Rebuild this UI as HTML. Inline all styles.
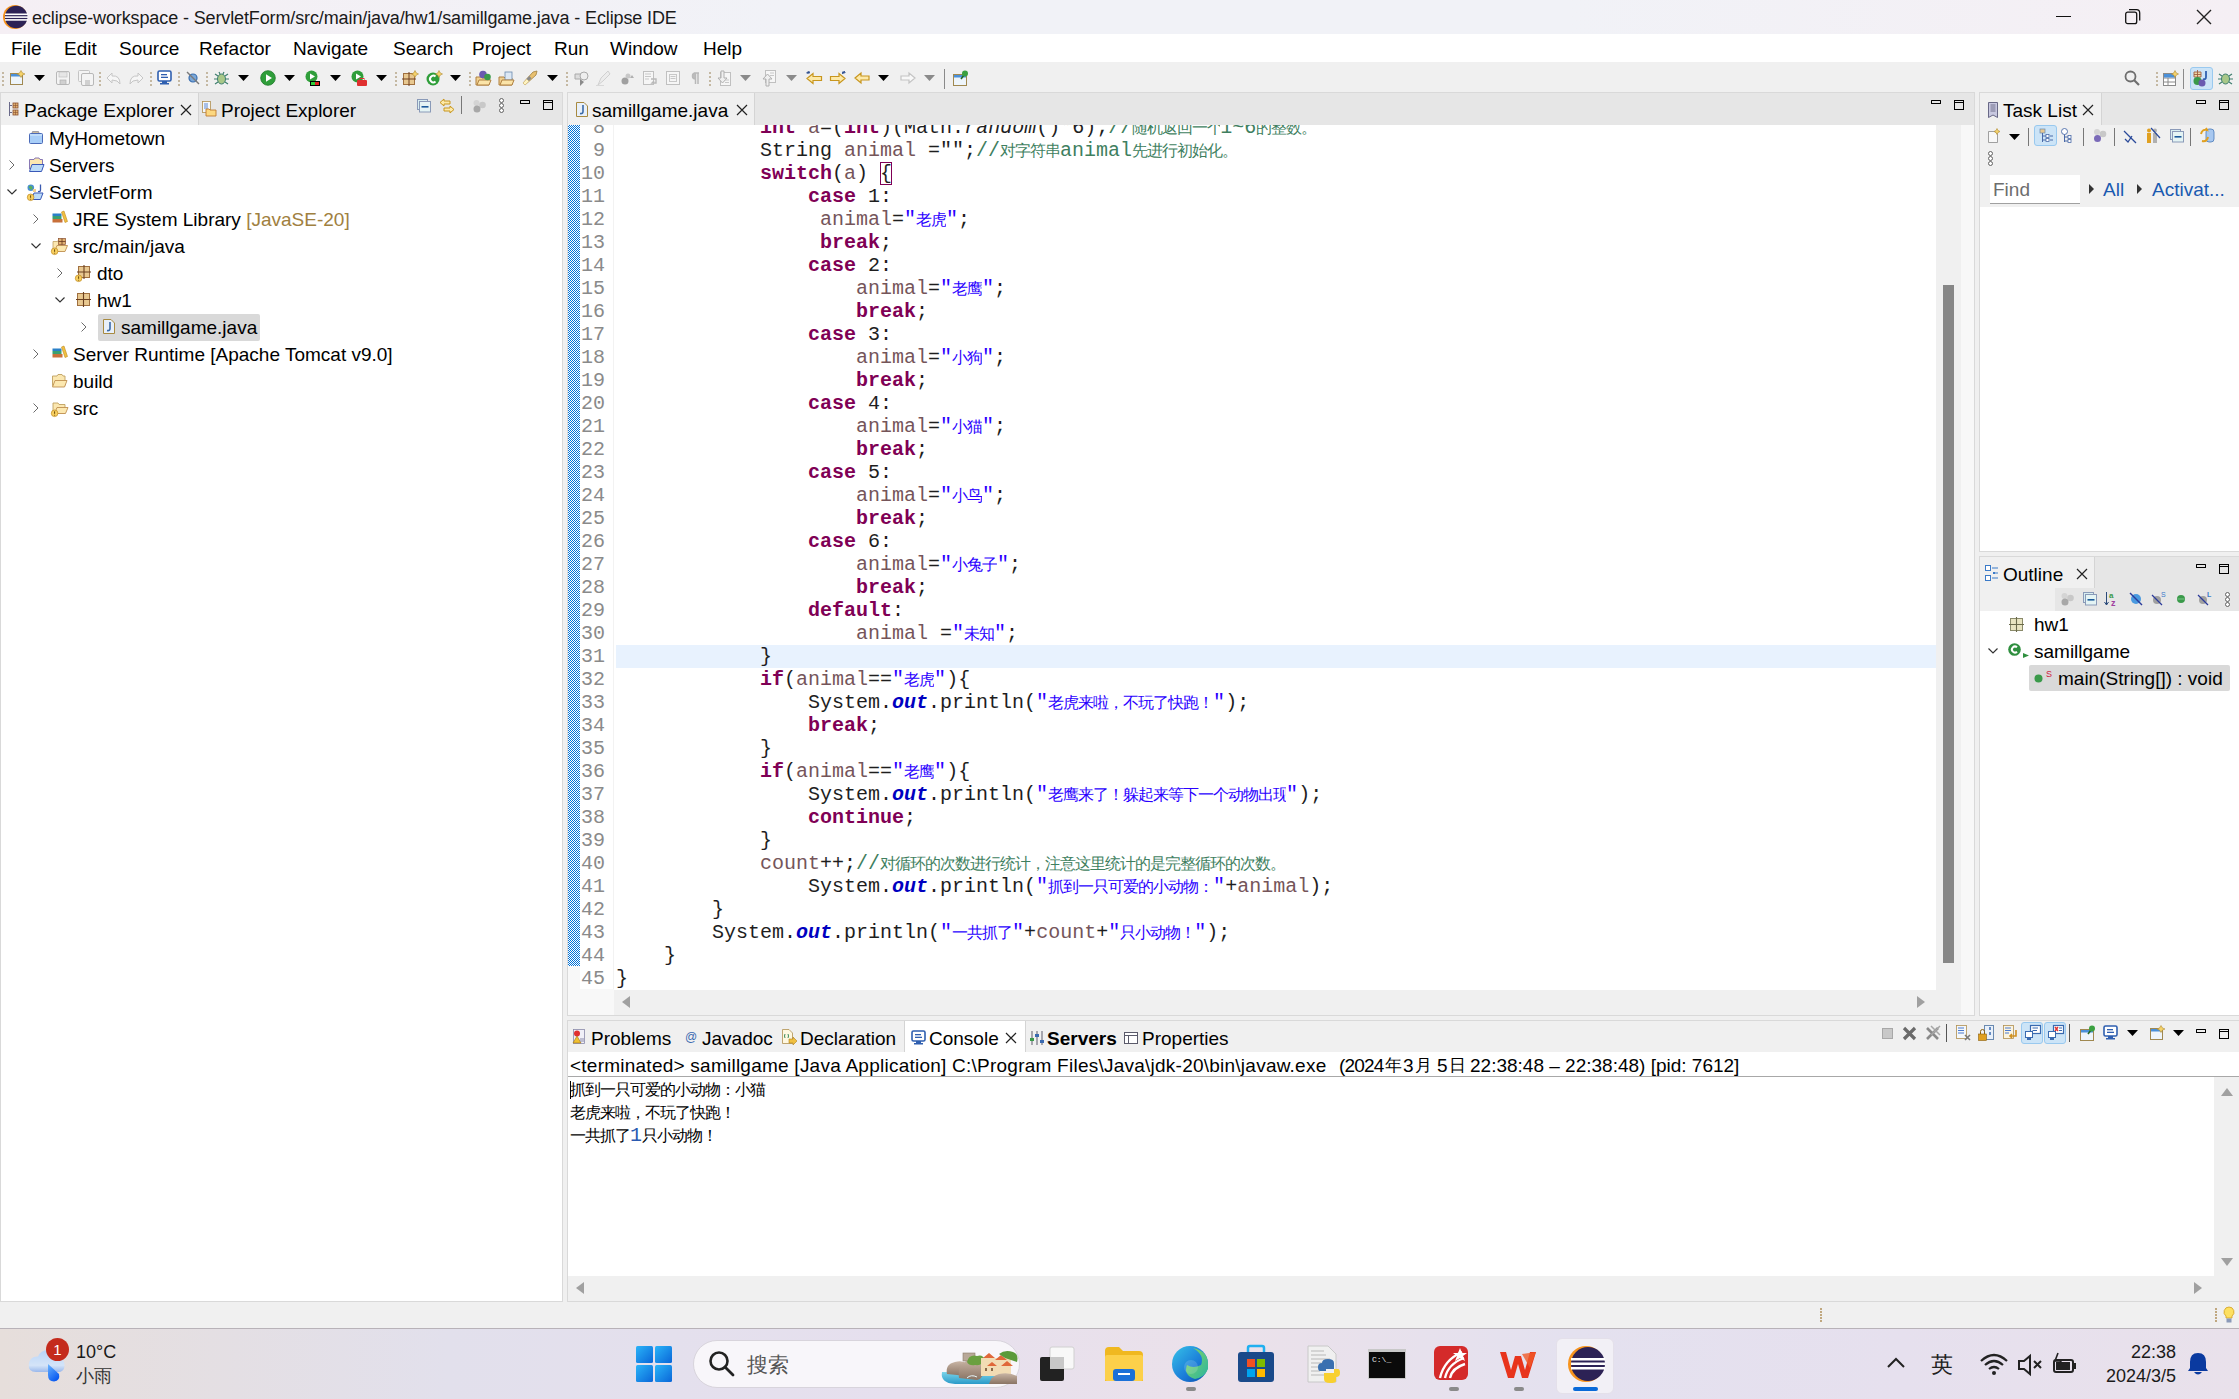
<!DOCTYPE html><html><head><meta charset="utf-8"><style>
*{margin:0;padding:0;box-sizing:border-box}
html,body{width:2239px;height:1399px;overflow:hidden}
body{position:relative;background:#f0f0f0;font-family:"Liberation Sans",sans-serif;font-size:19px;color:#000}
.a{position:absolute}
.t{position:absolute;white-space:nowrap;line-height:27px;height:27px;margin-top:1px}
svg{position:absolute;overflow:visible}
.code{position:absolute;font-family:"Liberation Mono",monospace;font-size:20px;line-height:23px;white-space:pre;color:#1e1e1e}
.kw{color:#7f0055;font-weight:bold}
.lv{color:#75555a}
.st{color:#2a00ff}
.cm{color:#3f7f5f}
.fi{color:#0000c0;font-weight:bold;font-style:italic}
.it{font-style:italic}
.cj{display:inline-block;vertical-align:top;overflow:hidden;height:23px;font-family:"Liberation Sans",sans-serif;font-size:16px;letter-spacing:-1px;line-height:23px;white-space:nowrap}
.tab{position:absolute;top:0;height:33px;line-height:33px;white-space:nowrap}
</style></head><body>
<div class="a" style="left:0;top:0;width:2239px;height:34px;background:linear-gradient(90deg,#f5eff4 0%,#f1f2f7 35%,#f1f2f7 70%,#f5eff4 100%)"></div>
<svg style="left:2px;top:4px" width="26" height="26" viewBox="0 0 26 26"><circle cx="13" cy="13" r="12" fill="#f7941e"/><circle cx="14.2" cy="13" r="11.3" fill="#2c2255"/><rect x="3" y="9.5" width="23" height="1.6" fill="#fff"/><rect x="3" y="12.3" width="23" height="1.6" fill="#fff"/><rect x="3" y="15.1" width="23" height="1.6" fill="#fff"/></svg>
<div class="t" style="left:32px;top:3px;font-size:18px;line-height:28px;letter-spacing:-0.12px;color:#1a1a1a">eclipse-workspace - ServletForm/src/main/java/hw1/samillgame.java - Eclipse IDE</div>
<div class="a" style="left:2056px;top:16px;width:15px;height:1px;background:#111"></div>
<svg style="left:2125px;top:9px" width="16" height="16" viewBox="0 0 16 16"><rect x="0.7" y="3.2" width="11" height="11.5" rx="2" fill="none" stroke="#111" stroke-width="1.3"/><path d="M4 0.7 H11.5 Q14.7 0.7 14.7 4 V11.5" fill="none" stroke="#111" stroke-width="1.3"/></svg>
<svg style="left:2196px;top:9px" width="16" height="16" viewBox="0 0 16 16"><path d="M1 1 L15 15 M15 1 L1 15" stroke="#222" stroke-width="1.4"/></svg>
<div class="a" style="left:0;top:34px;width:2239px;height:28px;background:#fff"></div>
<div class="t" style="left:11px;top:34px;line-height:28px">File</div>
<div class="t" style="left:64px;top:34px;line-height:28px">Edit</div>
<div class="t" style="left:119px;top:34px;line-height:28px">Source</div>
<div class="t" style="left:199px;top:34px;line-height:28px">Refactor</div>
<div class="t" style="left:293px;top:34px;line-height:28px">Navigate</div>
<div class="t" style="left:393px;top:34px;line-height:28px">Search</div>
<div class="t" style="left:472px;top:34px;line-height:28px">Project</div>
<div class="t" style="left:554px;top:34px;line-height:28px">Run</div>
<div class="t" style="left:610px;top:34px;line-height:28px">Window</div>
<div class="t" style="left:703px;top:34px;line-height:28px">Help</div>
<div class="a" style="left:0px;top:62px;width:2239px;height:30px;background:#f0f0f0;"></div>
<div class="a" style="left:2px;top:72px;width:2px;height:2px;background:#c4b8a2"></div><div class="a" style="left:2px;top:76px;width:2px;height:2px;background:#c4b8a2"></div><div class="a" style="left:2px;top:80px;width:2px;height:2px;background:#c4b8a2"></div><div class="a" style="left:2px;top:84px;width:2px;height:2px;background:#c4b8a2"></div>
<svg style="left:9px;top:70px" width="16" height="16" viewBox="0 0 16 16"><rect x="1.5" y="3.5" width="12" height="11" fill="#eef5fb" stroke="#a08850"/><rect x="2" y="4" width="11" height="2.5" fill="#4a90d9"/><path d="M12 0.5 L13.5 3 L16 4 L13.5 5 L12 7.5 L10.5 5 L8 4 L10.5 3 Z" fill="#f5d36b" stroke="#b08a30" stroke-width="0.6"/></svg>
<svg style="left:34px;top:75px" width="11" height="6" viewBox="0 0 11 6"><path d="M0 0 H11 L5.5 6 Z" fill="#000"/></svg>
<svg style="left:55px;top:70px" width="16" height="16" viewBox="0 0 16 16"><rect x="1.5" y="1.5" width="13" height="13" rx="1.5" fill="#f4f4f4" stroke="#b8b8b8"/><rect x="4" y="2" width="8" height="5" fill="#e6e6e6" stroke="#c0c0c0" stroke-width="0.7"/><rect x="5" y="10" width="6" height="4.5" fill="#d0d0d0" stroke="#b0b0b0" stroke-width="0.7"/></svg>
<svg style="left:78px;top:70px" width="16" height="16" viewBox="0 0 16 16"><rect x="0.5" y="0.5" width="11" height="11" rx="1" fill="#f4f4f4" stroke="#c4c4c4"/><rect x="3.5" y="3.5" width="12" height="12" rx="1.5" fill="#f4f4f4" stroke="#b8b8b8"/><rect x="7" y="10" width="5" height="5" fill="#d0d0d0"/></svg>
<div class="a" style="left:99px;top:72px;width:2px;height:2px;background:#c4b8a2"></div><div class="a" style="left:99px;top:76px;width:2px;height:2px;background:#c4b8a2"></div><div class="a" style="left:99px;top:80px;width:2px;height:2px;background:#c4b8a2"></div><div class="a" style="left:99px;top:84px;width:2px;height:2px;background:#c4b8a2"></div>
<svg style="left:106px;top:70px" width="16" height="16" viewBox="0 0 16 16"><path d="M6 3 L1 8 L6 13 V10 Q12 10 14 14 Q14 5 6 6 Z" fill="#f6f6f6" stroke="#c6c6c6"/></svg>
<svg style="left:128px;top:70px" width="16" height="16" viewBox="0 0 16 16"><path d="M10 3 L15 8 L10 13 V10 Q4 10 2 14 Q2 5 10 6 Z" fill="#f6f6f6" stroke="#c6c6c6"/></svg>
<div class="a" style="left:150px;top:72px;width:2px;height:2px;background:#c4b8a2"></div><div class="a" style="left:150px;top:76px;width:2px;height:2px;background:#c4b8a2"></div><div class="a" style="left:150px;top:80px;width:2px;height:2px;background:#c4b8a2"></div><div class="a" style="left:150px;top:84px;width:2px;height:2px;background:#c4b8a2"></div>
<svg style="left:157px;top:70px" width="16" height="16" viewBox="0 0 16 16"><rect x="1" y="1" width="13" height="10" rx="1.5" fill="#fff" stroke="#2f5fb0" stroke-width="1.6"/><rect x="4" y="4" width="6" height="1.3" fill="#2f5fb0"/><rect x="4" y="6.7" width="7" height="1.3" fill="#2f5fb0"/><rect x="5" y="11" width="5" height="2" fill="#2f5fb0"/><rect x="3" y="13" width="9" height="1.5" fill="#2f5fb0"/></svg>
<div class="a" style="left:178px;top:72px;width:2px;height:2px;background:#c4b8a2"></div><div class="a" style="left:178px;top:76px;width:2px;height:2px;background:#c4b8a2"></div><div class="a" style="left:178px;top:80px;width:2px;height:2px;background:#c4b8a2"></div><div class="a" style="left:178px;top:84px;width:2px;height:2px;background:#c4b8a2"></div>
<svg style="left:185px;top:70px" width="16" height="16" viewBox="0 0 16 16"><circle cx="8" cy="8" r="4" fill="#7aa7d8" stroke="#3a6fb0" stroke-width="1.2"/><path d="M2 2 L14 14" stroke="#7a7a7a" stroke-width="1.4"/></svg>
<div class="a" style="left:206px;top:72px;width:2px;height:2px;background:#c4b8a2"></div><div class="a" style="left:206px;top:76px;width:2px;height:2px;background:#c4b8a2"></div><div class="a" style="left:206px;top:80px;width:2px;height:2px;background:#c4b8a2"></div><div class="a" style="left:206px;top:84px;width:2px;height:2px;background:#c4b8a2"></div>
<svg style="left:213px;top:70px" width="16" height="16" viewBox="0 0 16 16"><ellipse cx="8.5" cy="9" rx="4" ry="5" fill="#a8c888" stroke="#3f7f6f"/><path d="M2 4 L5 6 M15 4 L12 6 M1 9 H4.5 M16 9 H12.5 M2 14 L5 12 M15 14 L12 12 M6 2 L7 4 M11 2 L10 4" stroke="#3f7f6f" stroke-width="1.2"/></svg>
<svg style="left:238px;top:75px" width="11" height="6" viewBox="0 0 11 6"><path d="M0 0 H11 L5.5 6 Z" fill="#000"/></svg>
<svg style="left:260px;top:70px" width="16" height="16" viewBox="0 0 16 16"><circle cx="8" cy="8" r="7.3" fill="#2f9e3a" stroke="#1f7a2a" stroke-width="0.8"/><path d="M6 4.2 L12 8 L6 11.8 Z" fill="#fff"/></svg>
<svg style="left:284px;top:75px" width="11" height="6" viewBox="0 0 11 6"><path d="M0 0 H11 L5.5 6 Z" fill="#000"/></svg>
<svg style="left:305px;top:70px" width="16" height="16" viewBox="0 0 16 16"><circle cx="6.5" cy="6.5" r="6" fill="#2f9e3a"/><path d="M5 3.5 L10 6.5 L5 9.5 Z" fill="#fff"/><rect x="5" y="11" width="10" height="5" fill="#000"/><rect x="6" y="12" width="4" height="3" fill="#2fcf3a"/><rect x="10" y="12" width="4" height="3" fill="#e02020"/></svg>
<svg style="left:330px;top:75px" width="11" height="6" viewBox="0 0 11 6"><path d="M0 0 H11 L5.5 6 Z" fill="#000"/></svg>
<svg style="left:351px;top:70px" width="16" height="16" viewBox="0 0 16 16"><circle cx="6.5" cy="6.5" r="6" fill="#2f9e3a"/><path d="M5 3.5 L10 6.5 L5 9.5 Z" fill="#fff"/><rect x="6" y="10" width="10" height="6" rx="1" fill="#e03030"/><rect x="9" y="8.5" width="4" height="2" fill="none" stroke="#e03030"/></svg>
<svg style="left:376px;top:75px" width="11" height="6" viewBox="0 0 11 6"><path d="M0 0 H11 L5.5 6 Z" fill="#000"/></svg>
<div class="a" style="left:395px;top:72px;width:2px;height:2px;background:#c4b8a2"></div><div class="a" style="left:395px;top:76px;width:2px;height:2px;background:#c4b8a2"></div><div class="a" style="left:395px;top:80px;width:2px;height:2px;background:#c4b8a2"></div><div class="a" style="left:395px;top:84px;width:2px;height:2px;background:#c4b8a2"></div>
<svg style="left:402px;top:70px" width="16" height="16" viewBox="0 0 16 16"><rect x="1.5" y="3.5" width="11" height="11" fill="#e8c890" stroke="#a07040"/><path d="M7 2 V16 M0 9 H14" stroke="#704020" stroke-width="1"/><path d="M13 0.5 L14.3 3 L16.5 4 L14.3 5 L13 7.5 L11.7 5 L9.5 4 L11.7 3 Z" fill="#f5d36b" stroke="#b08a30" stroke-width="0.6"/></svg>
<svg style="left:426px;top:70px" width="16" height="16" viewBox="0 0 16 16"><circle cx="7" cy="9" r="6.5" fill="#2f9e3a"/><path d="M9.5 6.5 A3.3 3.3 0 1 0 9.5 11.5" fill="none" stroke="#fff" stroke-width="2"/><path d="M13 0.5 L14.3 3 L16.5 4 L14.3 5 L13 7.5 L11.7 5 L9.5 4 L11.7 3 Z" fill="#f5d36b" stroke="#b08a30" stroke-width="0.6"/></svg>
<svg style="left:450px;top:75px" width="11" height="6" viewBox="0 0 11 6"><path d="M0 0 H11 L5.5 6 Z" fill="#000"/></svg>
<div class="a" style="left:469px;top:72px;width:2px;height:2px;background:#c4b8a2"></div><div class="a" style="left:469px;top:76px;width:2px;height:2px;background:#c4b8a2"></div><div class="a" style="left:469px;top:80px;width:2px;height:2px;background:#c4b8a2"></div><div class="a" style="left:469px;top:84px;width:2px;height:2px;background:#c4b8a2"></div>
<svg style="left:475px;top:70px" width="16" height="16" viewBox="0 0 16 16"><path d="M1 7 H6 L7 8 H14 V15 H1 Z" fill="#f0d090" stroke="#b08040"/><path d="M2 15 L4 10 H16 L14 15 Z" fill="#fbe4a8" stroke="#b08040"/><circle cx="8" cy="4.5" r="3.8" fill="#6a5ab0"/><circle cx="12.5" cy="7" r="3.3" fill="#3a9a4a"/></svg>
<svg style="left:498px;top:70px" width="16" height="16" viewBox="0 0 16 16"><path d="M1 7 H6 L7 8 H14 V15 H1 Z" fill="#f0d090" stroke="#b08040"/><rect x="7" y="2" width="7" height="8" fill="#dde8f4" stroke="#6a8ab0" stroke-width="0.8"/><path d="M2 15 L4 10 H16 L14 15 Z" fill="#fbe4a8" stroke="#b08040"/></svg>
<svg style="left:522px;top:70px" width="16" height="16" viewBox="0 0 16 16"><path d="M3 15 L1 13 L11 2 L15 1 L14 5 Z" fill="#e8c070" stroke="#a08040" stroke-width="0.8"/><path d="M3 15 L1 13 L5 9 L7 11 Z" fill="#fff4c0"/><rect x="5" y="7" width="4" height="3" transform="rotate(-45 7 8.5)" fill="#8a8a8a"/></svg>
<svg style="left:547px;top:75px" width="11" height="6" viewBox="0 0 11 6"><path d="M0 0 H11 L5.5 6 Z" fill="#000"/></svg>
<div class="a" style="left:566px;top:72px;width:2px;height:2px;background:#c4b8a2"></div><div class="a" style="left:566px;top:76px;width:2px;height:2px;background:#c4b8a2"></div><div class="a" style="left:566px;top:80px;width:2px;height:2px;background:#c4b8a2"></div><div class="a" style="left:566px;top:84px;width:2px;height:2px;background:#c4b8a2"></div>
<svg style="left:573px;top:70px" width="16" height="16" viewBox="0 0 16 16"><path d="M2 4 H8 V9 H2 Z" fill="#ddd" stroke="#aaa"/><circle cx="11" cy="6" r="4" fill="#eee" stroke="#aaa"/><path d="M7 9 L7 16 L11 12 Z" fill="#8a8a8a"/></svg>
<svg style="left:596px;top:70px" width="16" height="16" viewBox="0 0 16 16"><path d="M2 15 L5 8 L12 1 L14 4 L7 11 Z" fill="#ececec" stroke="#d0d0d0"/><path d="M0 15.5 H8" stroke="#d8d8d8"/></svg>
<svg style="left:620px;top:70px" width="16" height="16" viewBox="0 0 16 16"><circle cx="5" cy="11" r="3.5" fill="#a0a0a0"/><circle cx="8" cy="6" r="2.5" fill="#c8c8c8"/><path d="M10 8 L14 8 L12 5 Z" fill="#b0b0b0"/></svg>
<svg style="left:642px;top:70px" width="16" height="16" viewBox="0 0 16 16"><rect x="1.5" y="1.5" width="10" height="13" fill="#f6f6f6" stroke="#c0c0c0"/><path d="M3 4 H9 M3 6.5 H9 M3 9 H7" stroke="#c8c8c8"/><path d="M9 9 H14 V13 H10 L12 11" fill="none" stroke="#b8b8b8" stroke-width="1.4"/></svg>
<svg style="left:665px;top:70px" width="16" height="16" viewBox="0 0 16 16"><rect x="1.5" y="1.5" width="13" height="13" fill="#f6f6f6" stroke="#c0c0c0"/><rect x="4.5" y="4.5" width="7" height="7" fill="none" stroke="#c8c8c8"/><path d="M5.5 6.5 H10.5 M5.5 8.5 H10.5" stroke="#c8c8c8"/></svg>
<svg style="left:687px;top:70px" width="16" height="16" viewBox="0 0 16 16"><path d="M7 3 H12 M8.5 3 V14 M11 3 V14 M8.5 3 A3 3 0 0 0 8.5 9" fill="#bdbdbd" stroke="#b8b8b8" stroke-width="1.5"/></svg>
<div class="a" style="left:709px;top:72px;width:2px;height:2px;background:#c4b8a2"></div><div class="a" style="left:709px;top:76px;width:2px;height:2px;background:#c4b8a2"></div><div class="a" style="left:709px;top:80px;width:2px;height:2px;background:#c4b8a2"></div><div class="a" style="left:709px;top:84px;width:2px;height:2px;background:#c4b8a2"></div>
<svg style="left:716px;top:70px" width="16" height="16" viewBox="0 0 16 16"><rect x="4.5" y="2.5" width="10" height="13" fill="#f6f6f6" stroke="#c0c0c0"/><path d="M5 1 V8 H2 L6.5 13 L11 8 H8 V1 Z" fill="#f0f0f0" stroke="#b0b0b0"/><path d="M9 10 H13 M9 12.5 H13" stroke="#c8c8c8"/></svg>
<svg style="left:740px;top:75px" width="11" height="6" viewBox="0 0 11 6"><path d="M0 0 H11 L5.5 6 Z" fill="#8a8a8a"/></svg>
<svg style="left:761px;top:70px" width="16" height="16" viewBox="0 0 16 16"><rect x="4.5" y="0.5" width="10" height="12" fill="#f6f6f6" stroke="#c0c0c0"/><path d="M5 16 V9 H2 L6.5 4 L11 9 H8 V16 Z" fill="#f0f0f0" stroke="#b0b0b0"/><path d="M9 3 H13 M9 5.5 H13" stroke="#c8c8c8"/></svg>
<svg style="left:786px;top:75px" width="11" height="6" viewBox="0 0 11 6"><path d="M0 0 H11 L5.5 6 Z" fill="#8a8a8a"/></svg>
<svg style="left:806px;top:70px" width="16" height="16" viewBox="0 0 16 16"><path d="M1 8.5 L7 3.5 V6.5 H15.5 V10.5 H7 V13.5 Z" fill="#fde9a8" stroke="#c8961e" stroke-width="1.2"/><path d="M2 1 L3 4 M0.5 2.5 L4 2.5 M0.8 4 L3.5 1" stroke="#2f4f8f" stroke-width="0.9"/></svg>
<svg style="left:829px;top:70px" width="16" height="16" viewBox="0 0 16 16"><path d="M16 8.5 L10 3.5 V6.5 H1.5 V10.5 H10 V13.5 Z" fill="#fde9a8" stroke="#c8961e" stroke-width="1.2"/><path d="M14 1 L15 4 M13 2.5 L16.5 2.5 M13 4 L16 1" stroke="#2f4f8f" stroke-width="0.9"/></svg>
<svg style="left:854px;top:70px" width="16" height="16" viewBox="0 0 16 16"><path d="M1 8 L7 3 V6 H15 V10 H7 V13 Z" fill="#fde9a8" stroke="#c8961e" stroke-width="1.2"/></svg>
<svg style="left:878px;top:75px" width="11" height="6" viewBox="0 0 11 6"><path d="M0 0 H11 L5.5 6 Z" fill="#000"/></svg>
<svg style="left:900px;top:70px" width="16" height="16" viewBox="0 0 16 16"><path d="M15 8 L9 3 V6 H1 V10 H9 V13 Z" fill="#f8f8f8" stroke="#c4c4c4" stroke-width="1.2"/></svg>
<svg style="left:924px;top:75px" width="11" height="6" viewBox="0 0 11 6"><path d="M0 0 H11 L5.5 6 Z" fill="#8a8a8a"/></svg>
<div class="a" style="left:944px;top:69px;width:1px;height:20px;background:#8a8a8a"></div>
<svg style="left:952px;top:70px" width="16" height="16" viewBox="0 0 16 16"><rect x="1.5" y="4.5" width="13" height="11" fill="#eef5fb" stroke="#a08850"/><rect x="2" y="5" width="12" height="2.5" fill="#4a90d9"/><path d="M9 9 L12 5" stroke="#226622" stroke-width="1.5"/><circle cx="13" cy="3.5" r="3" fill="#3aa040"/></svg>
<svg style="left:2124px;top:70px" width="16" height="16" viewBox="0 0 16 16"><circle cx="6.5" cy="6.5" r="5" fill="none" stroke="#6e6e6e" stroke-width="1.8"/><path d="M10 10 L15 15" stroke="#6e6e6e" stroke-width="2.2"/></svg>
<div class="a" style="left:2156px;top:72px;width:2px;height:2px;background:#c4b8a2"></div><div class="a" style="left:2156px;top:76px;width:2px;height:2px;background:#c4b8a2"></div><div class="a" style="left:2156px;top:80px;width:2px;height:2px;background:#c4b8a2"></div><div class="a" style="left:2156px;top:84px;width:2px;height:2px;background:#c4b8a2"></div>
<svg style="left:2162px;top:70px" width="16" height="16" viewBox="0 0 16 16"><rect x="1.5" y="3.5" width="12" height="12" fill="#fff" stroke="#8a8a8a"/><path d="M1.5 8 H13.5 M6 8 V15.5 M1.5 12 H13.5" stroke="#8a8a8a"/><rect x="2" y="4" width="11" height="3.5" fill="#4a90d9"/><path d="M13 0.5 L14.3 3 L16.5 4 L14.3 5 L13 7.5 L11.7 5 L9.5 4 L11.7 3 Z" fill="#f5d36b" stroke="#b08a30" stroke-width="0.6"/></svg>
<div class="a" style="left:2183px;top:69px;width:1px;height:20px;background:#8a8a8a"></div>
<div class="a" style="left:2190px;top:67px;width:23px;height:23px;background:#cce4f7;border:1px solid #99c9ef;border-radius:3px"></div>
<svg style="left:2193px;top:70px" width="16" height="16" viewBox="0 0 16 16"><path d="M1 2 H8 V7 H1 Z M4.5 0 V9 M1 4.5 H8" stroke="#a06040" fill="#f0d8a8" stroke-width="0.9"/><path d="M13 1 V7 Q13 10 10 9" fill="none" stroke="#3060b0" stroke-width="1.8"/><circle cx="4.5" cy="11" r="4" fill="#3a9a4a"/><circle cx="9" cy="13" r="3.5" fill="#6a5ab0"/></svg>
<svg style="left:2217px;top:70px" width="16" height="16" viewBox="0 0 16 16"><ellipse cx="8.5" cy="9" rx="4" ry="5" fill="#a8c888" stroke="#3f7f6f"/><path d="M2 4 L5 6 M15 4 L12 6 M1 9 H4.5 M16 9 H12.5 M2 14 L5 12 M15 14 L12 12" stroke="#3f7f6f" stroke-width="1.2"/></svg>
<div class="a" style="left:0px;top:92px;width:563px;height:1210px;border:1px solid #d9d9d9;background:#fff"></div>
<div class="a" style="left:1px;top:93px;width:561px;height:32px;background:#e6e6e6;"></div>
<div class="a" style="left:1px;top:93px;width:197px;height:32px;background:#f0f0f0;"></div>
<div class="a" style="left:198px;top:93px;width:1px;height:32px;background:#d4d4d4;"></div>
<svg style="left:8px;top:101px" width="16" height="16" viewBox="0 0 16 16"><path d="M1.5 1 V15 M1.5 4.5 H4 M1.5 11.5 H4" stroke="#6a6a8a" stroke-width="1"/><rect x="5" y="2" width="5" height="5" fill="#e0b070" stroke="#8a5030" stroke-width="0.8"/><path d="M7.5 2 V7 M5 4.5 H10" stroke="#8a5030" stroke-width="0.6"/><rect x="5" y="9" width="5" height="5" fill="#e0b070" stroke="#8a5030" stroke-width="0.8"/><path d="M7.5 9 V14 M5 11.5 H10" stroke="#8a5030" stroke-width="0.6"/></svg>
<div class="t" style="left:24px;top:96px;line-height:27px;height:27px;">Package Explorer</div>
<svg style="left:180px;top:104px" width="12" height="12" viewBox="0 0 12 12"><path d="M1 1 L11 11 M11 1 L1 11" stroke="#222" stroke-width="1.2"/></svg>
<svg style="left:201px;top:101px" width="16" height="16" viewBox="0 0 16 16"><rect x="1.5" y="0.5" width="8" height="11" fill="#f4f8fc" stroke="#b09050" stroke-width="0.8"/><path d="M3 3 H7 M3 5 H7 M3 7 H7" stroke="#4a7ad0" stroke-width="0.9"/><path d="M5 8 H8 L9 9 H15 V15 H5 Z" fill="#fcd880" stroke="#c07a30" stroke-width="0.9"/></svg>
<div class="t" style="left:221px;top:96px;line-height:27px;height:27px;">Project Explorer</div>
<svg style="left:417px;top:99px" width="16" height="16" viewBox="0 0 16 16"><rect x="0.5" y="0.5" width="10" height="10" fill="#d8eef0" stroke="#8a9ab8"/><rect x="2.5" y="2.5" width="11" height="10.5" fill="#e4f4f4" stroke="#8a9ab8"/><rect x="4.5" y="7" width="7" height="1.6" fill="#1a5a9a"/></svg>
<svg style="left:439px;top:98px" width="16" height="16" viewBox="0 0 16 16"><path d="M1 4.5 L5 1 V3 H11 V6 H5 V8 Z" fill="#fde9a8" stroke="#c8961e" stroke-width="1"/><path d="M15 11.5 L11 8 V10 H5 V13 H11 V15 Z" fill="#fde9a8" stroke="#c8961e" stroke-width="1"/></svg>
<div class="a" style="left:461px;top:96px;width:1px;height:18px;background:#777"></div>
<svg style="left:472px;top:99px" width="16" height="16" viewBox="0 0 16 16"><circle cx="4.5" cy="4" r="3" fill="#d4d4d4"/><circle cx="10.5" cy="6" r="3.3" fill="#c8c8c8"/><circle cx="5" cy="10" r="3.5" fill="#a8a8a8"/></svg>
<svg style="left:499px;top:98px" width="5" height="15" viewBox="0 0 5 15"><circle cx="2.5" cy="2.5" r="2" fill="#fff" stroke="#555" stroke-width="0.9"/><circle cx="2.5" cy="7.5" r="2" fill="#fff" stroke="#555" stroke-width="0.9"/><circle cx="2.5" cy="12.5" r="2" fill="#fff" stroke="#555" stroke-width="0.9"/></svg>
<div class="a" style="left:520px;top:100px;width:10px;height:4px;background:transparent;border:1px solid #000;border-radius:0.5px"></div>
<div class="a" style="left:543px;top:100px;width:10px;height:10px;border:1px solid #000"></div><div class="a" style="left:543px;top:102px;width:10px;height:1px;background:#000"></div>
<div class="a" style="left:98px;top:314px;width:162px;height:27px;background:#d9d9d9;border-radius:2px"></div>
<svg style="left:28px;top:130px" width="17" height="17" viewBox="0 0 17 17"><path d="M4.5 1.5 H10.5 L11 3 H4 Z" fill="#f8e0a0" stroke="#8a8aa0" stroke-width="0.8"/><rect x="1.5" y="3.5" width="13" height="10" rx="1" fill="#a8cef8" stroke="#4a6ab8" stroke-width="1"/><path d="M2 5 H14" stroke="#d8ecfc" stroke-width="1"/></svg>
<div class="t" style="left:49px;top:124px;line-height:27px;height:27px;">MyHometown</div>
<svg style="left:9px;top:160px" width="6" height="10" viewBox="0 0 6 10"><path d="M0.5 0.5 L5 5 L0.5 9.5" fill="none" stroke="#6a6a6a" stroke-width="1"/></svg>
<svg style="left:28px;top:157px" width="17" height="17" viewBox="0 0 17 17"><path d="M1.5 2.5 H6 L7 1 H11 L12 2.5 H14.5 V12 H1.5 Z" fill="#fbe7b0" stroke="#7a6ab0" stroke-width="0.9"/><path d="M1.5 14.5 L4 7.5 H16 L13.5 14.5 Z" fill="#bcdcf8" stroke="#3a58b8" stroke-width="1"/></svg>
<div class="t" style="left:49px;top:151px;line-height:27px;height:27px;">Servers</div>
<svg style="left:7px;top:189px" width="10" height="6" viewBox="0 0 10 6"><path d="M0.5 0.5 L5 5 L9.5 0.5" fill="none" stroke="#333" stroke-width="1.2"/></svg>
<svg style="left:27px;top:184px" width="17" height="17" viewBox="0 0 17 17"><circle cx="3.8" cy="3.8" r="3.3" fill="#4a90d0"/><path d="M1.5 3 Q3 1 5 2.5 Q6.5 4.5 4 6 Z" fill="#5ab05a"/><path d="M13.5 0.5 V6 Q13.5 8 11 7.5" fill="none" stroke="#3a5ab0" stroke-width="1.3"/><path d="M6 5 H9 V8 H6 Z" fill="#f0d090"/><path d="M4.5 15.5 L7 9 H16 L13.5 15.5 Z" fill="#bcdcf8" stroke="#3a58b8" stroke-width="1"/><circle cx="3.6" cy="13.3" r="3.3" fill="#f8d060" stroke="#c08a20" stroke-width="0.7"/><path d="M3.6 11.3 V13.8 M3.6 14.8 V15.6" stroke="#5a3a00" stroke-width="0.9"/></svg>
<div class="t" style="left:49px;top:178px;line-height:27px;height:27px;">ServletForm</div>
<svg style="left:33px;top:214px" width="6" height="10" viewBox="0 0 6 10"><path d="M0.5 0.5 L5 5 L0.5 9.5" fill="none" stroke="#6a6a6a" stroke-width="1"/></svg>
<svg style="left:52px;top:211px" width="17" height="17" viewBox="0 0 17 17"><rect x="0.5" y="2.5" width="9" height="2.5" fill="#2a80c8"/><rect x="0.5" y="5" width="9" height="3" fill="#3aa070"/><rect x="0.5" y="8" width="10" height="3.5" fill="#c8703a"/><path d="M9.5 1 L12 0 L15.5 10.5 L13 11.5 Z" fill="#f0c040" stroke="#c08a20" stroke-width="0.6"/></svg>
<div class="t" style="left:73px;top:205px;line-height:27px;height:27px;">JRE System Library <span style="color:#a08040">[JavaSE-20]</span></div>
<svg style="left:31px;top:243px" width="10" height="6" viewBox="0 0 10 6"><path d="M0.5 0.5 L5 5 L9.5 0.5" fill="none" stroke="#333" stroke-width="1.2"/></svg>
<svg style="left:51px;top:238px" width="17" height="17" viewBox="0 0 17 17"><path d="M2 3.5 H6.5 L7.5 2 H11 V13 H2 Z" fill="#fbe7b0" stroke="#c0a060" stroke-width="0.8"/><rect x="7.5" y="0.5" width="7" height="6" fill="#e0b070" stroke="#8a5030" stroke-width="0.7"/><path d="M11 0.5 V6.5 M7.5 3.5 H14.5" stroke="#6a3a20" stroke-width="0.8"/><path d="M3.5 13.5 L6 7.5 H16.5 L14 13.5 Z" fill="#fce8b0" stroke="#c09050" stroke-width="0.9"/><circle cx="3.6" cy="13.3" r="3.3" fill="#f8d060" stroke="#c08a20" stroke-width="0.7"/><path d="M3.6 11.3 V13.8 M3.6 14.8 V15.6" stroke="#5a3a00" stroke-width="0.9"/></svg>
<div class="t" style="left:73px;top:232px;line-height:27px;height:27px;">src/main/java</div>
<svg style="left:57px;top:268px" width="6" height="10" viewBox="0 0 6 10"><path d="M0.5 0.5 L5 5 L0.5 9.5" fill="none" stroke="#6a6a6a" stroke-width="1"/></svg>
<svg style="left:75px;top:265px" width="17" height="17" viewBox="0 0 17 17"><rect x="3.5" y="1.5" width="11" height="11" fill="#e8c890" stroke="#a07040"/><path d="M9 0 V14 M2 7 H16" stroke="#6a4020" stroke-width="1.1"/><circle cx="3.6" cy="13.3" r="3.3" fill="#f8d060" stroke="#c08a20" stroke-width="0.7"/><path d="M3.6 11.3 V13.8 M3.6 14.8 V15.6" stroke="#5a3a00" stroke-width="0.9"/></svg>
<div class="t" style="left:97px;top:259px;line-height:27px;height:27px;">dto</div>
<svg style="left:55px;top:297px" width="10" height="6" viewBox="0 0 10 6"><path d="M0.5 0.5 L5 5 L9.5 0.5" fill="none" stroke="#333" stroke-width="1.2"/></svg>
<svg style="left:76px;top:292px" width="17" height="17" viewBox="0 0 17 17"><rect x="1.5" y="1.5" width="12" height="12" fill="#e8c890" stroke="#a07040"/><path d="M7.5 0 V15 M0 7.5 H15" stroke="#6a4020" stroke-width="1.1"/></svg>
<div class="t" style="left:97px;top:286px;line-height:27px;height:27px;">hw1</div>
<svg style="left:81px;top:322px" width="6" height="10" viewBox="0 0 6 10"><path d="M0.5 0.5 L5 5 L0.5 9.5" fill="none" stroke="#6a6a6a" stroke-width="1"/></svg>
<svg style="left:103px;top:319px" width="17" height="17" viewBox="0 0 17 17"><path d="M0.5 0.5 H8 L11.5 4 V14.5 H0.5 Z" fill="#e8f0fa" stroke="#a88a40"/><path d="M7 3 V9.5 Q7 12 4 11.5" fill="none" stroke="#3a6aa8" stroke-width="1.6"/></svg>
<div class="t" style="left:121px;top:313px;line-height:27px;height:27px;">samillgame.java</div>
<svg style="left:33px;top:349px" width="6" height="10" viewBox="0 0 6 10"><path d="M0.5 0.5 L5 5 L0.5 9.5" fill="none" stroke="#6a6a6a" stroke-width="1"/></svg>
<svg style="left:52px;top:346px" width="17" height="17" viewBox="0 0 17 17"><rect x="0.5" y="2.5" width="9" height="2.5" fill="#2a80c8"/><rect x="0.5" y="5" width="9" height="3" fill="#3aa070"/><rect x="0.5" y="8" width="10" height="3.5" fill="#c8703a"/><path d="M9.5 1 L12 0 L15.5 10.5 L13 11.5 Z" fill="#f0c040" stroke="#c08a20" stroke-width="0.6"/></svg>
<div class="t" style="left:73px;top:340px;line-height:27px;height:27px;">Server Runtime [Apache Tomcat v9.0]</div>
<svg style="left:51px;top:373px" width="17" height="17" viewBox="0 0 17 17"><path d="M1.5 3 H6 L7 1.5 H11 L12 3 H14 V12.5 H1.5 Z" fill="#fbe7b0" stroke="#c0a060" stroke-width="0.9"/><path d="M1.5 14 L4 7.5 H16 L13.5 14 Z" fill="#fce8b0" stroke="#c09050" stroke-width="0.9"/></svg>
<div class="t" style="left:73px;top:367px;line-height:27px;height:27px;">build</div>
<svg style="left:33px;top:403px" width="6" height="10" viewBox="0 0 6 10"><path d="M0.5 0.5 L5 5 L0.5 9.5" fill="none" stroke="#6a6a6a" stroke-width="1"/></svg>
<svg style="left:51px;top:400px" width="17" height="17" viewBox="0 0 17 17"><path d="M2 3 H7 L8 4.5 H14 V13 H2 Z" fill="#fbe7b0" stroke="#c0a060" stroke-width="0.9"/><path d="M3.5 13.5 L6 7.5 H17 L14.5 13.5 Z" fill="#fce8b0" stroke="#c09050" stroke-width="0.9"/><circle cx="3.6" cy="13.3" r="3.3" fill="#f8d060" stroke="#c08a20" stroke-width="0.7"/><path d="M3.6 11.3 V13.8 M3.6 14.8 V15.6" stroke="#5a3a00" stroke-width="0.9"/></svg>
<div class="t" style="left:73px;top:394px;line-height:27px;height:27px;">src</div>
<div class="a" style="left:567px;top:92px;width:1408px;height:924px;border:1px solid #d9d9d9;background:#fff"></div>
<div class="a" style="left:568px;top:93px;width:1406px;height:32px;background:#e6e6e6;"></div>
<div class="a" style="left:568px;top:93px;width:186px;height:32px;background:#f0f0f0;"></div>
<div class="a" style="left:754px;top:93px;width:1px;height:32px;background:#d4d4d4;"></div>
<svg style="left:576px;top:102px" width="12" height="15" viewBox="0 0 12 15"><path d="M0.5 0.5 H8 L11.5 4 V14.5 H0.5 Z" fill="#e8f0fa" stroke="#a88a40"/><path d="M7 3 V9.5 Q7 12 4 11.5" fill="none" stroke="#3a6aa8" stroke-width="1.6"/></svg>
<div class="t" style="left:592px;top:96px;line-height:27px;height:27px;">samillgame.java</div>
<svg style="left:736px;top:104px" width="12" height="12" viewBox="0 0 12 12"><path d="M1 1 L11 11 M11 1 L1 11" stroke="#222" stroke-width="1.2"/></svg>
<div class="a" style="left:1931px;top:100px;width:10px;height:4px;background:transparent;border:1px solid #000;border-radius:0.5px"></div>
<div class="a" style="left:1954px;top:100px;width:10px;height:10px;border:1px solid #000"></div><div class="a" style="left:1954px;top:102px;width:10px;height:1px;background:#000"></div>
<div class="a" style="left:568px;top:125px;width:12px;height:841px;background:#fff;background-image:repeating-conic-gradient(#0072d8 0% 25%, #ffffff 0% 50%);background-size:2px 2px"></div>
<div class="a" style="left:568px;top:966px;width:12px;height:49px;background:#f8f8f8;"></div>
<div class="a" style="left:580px;top:125px;width:34px;height:864px;background:#fff;"></div>
<div class="a" style="left:613px;top:125px;width:1px;height:865px;background:#f2f2f2;"></div>
<div class="a" style="left:616px;top:645px;width:1320px;height:23px;background:#e8f2fe;"></div>
<div class="a" style="left:568px;top:125px;width:1368px;height:865px;overflow:hidden">
<div class="code" style="left:0;top:0;color:#8a8a8a"><div style="position:absolute;left:0;top:-9px;width:37px;text-align:right">8</div><div style="position:absolute;left:0;top:14px;width:37px;text-align:right">9</div><div style="position:absolute;left:0;top:37px;width:37px;text-align:right">10</div><div style="position:absolute;left:0;top:60px;width:37px;text-align:right">11</div><div style="position:absolute;left:0;top:83px;width:37px;text-align:right">12</div><div style="position:absolute;left:0;top:106px;width:37px;text-align:right">13</div><div style="position:absolute;left:0;top:129px;width:37px;text-align:right">14</div><div style="position:absolute;left:0;top:152px;width:37px;text-align:right">15</div><div style="position:absolute;left:0;top:175px;width:37px;text-align:right">16</div><div style="position:absolute;left:0;top:198px;width:37px;text-align:right">17</div><div style="position:absolute;left:0;top:221px;width:37px;text-align:right">18</div><div style="position:absolute;left:0;top:244px;width:37px;text-align:right">19</div><div style="position:absolute;left:0;top:267px;width:37px;text-align:right">20</div><div style="position:absolute;left:0;top:290px;width:37px;text-align:right">21</div><div style="position:absolute;left:0;top:313px;width:37px;text-align:right">22</div><div style="position:absolute;left:0;top:336px;width:37px;text-align:right">23</div><div style="position:absolute;left:0;top:359px;width:37px;text-align:right">24</div><div style="position:absolute;left:0;top:382px;width:37px;text-align:right">25</div><div style="position:absolute;left:0;top:405px;width:37px;text-align:right">26</div><div style="position:absolute;left:0;top:428px;width:37px;text-align:right">27</div><div style="position:absolute;left:0;top:451px;width:37px;text-align:right">28</div><div style="position:absolute;left:0;top:474px;width:37px;text-align:right">29</div><div style="position:absolute;left:0;top:497px;width:37px;text-align:right">30</div><div style="position:absolute;left:0;top:520px;width:37px;text-align:right">31</div><div style="position:absolute;left:0;top:543px;width:37px;text-align:right">32</div><div style="position:absolute;left:0;top:566px;width:37px;text-align:right">33</div><div style="position:absolute;left:0;top:589px;width:37px;text-align:right">34</div><div style="position:absolute;left:0;top:612px;width:37px;text-align:right">35</div><div style="position:absolute;left:0;top:635px;width:37px;text-align:right">36</div><div style="position:absolute;left:0;top:658px;width:37px;text-align:right">37</div><div style="position:absolute;left:0;top:681px;width:37px;text-align:right">38</div><div style="position:absolute;left:0;top:704px;width:37px;text-align:right">39</div><div style="position:absolute;left:0;top:727px;width:37px;text-align:right">40</div><div style="position:absolute;left:0;top:750px;width:37px;text-align:right">41</div><div style="position:absolute;left:0;top:773px;width:37px;text-align:right">42</div><div style="position:absolute;left:0;top:796px;width:37px;text-align:right">43</div><div style="position:absolute;left:0;top:819px;width:37px;text-align:right">44</div><div style="position:absolute;left:0;top:842px;width:37px;text-align:right">45</div></div>
<div class="code" style="left:48px;top:0"><div style="position:absolute;left:0;top:-9px;height:23px">            <span class="kw">int</span> <span class="lv">a</span>=(<span class="kw">int</span>)(Math.<span class="it">random</span>()*6);<span class="cm">//<span class="cj" style="width:88px">随机返回一个</span>1~6<span class="cj" style="width:60px">的整数。</span></span></div><div style="position:absolute;left:0;top:14px;height:23px">            String <span class="lv">animal</span> ="";<span class="cm">//<span class="cj" style="width:60px">对字符串</span>animal<span class="cj" style="width:105px">先进行初始化。</span></span></div><div style="position:absolute;left:0;top:37px;height:23px">            <span class="kw">switch</span>(<span class="lv">a</span>) <span style="outline:1px solid #7f0055;outline-offset:-1px">{</span></div><div style="position:absolute;left:0;top:60px;height:23px">                <span class="kw">case</span> 1:</div><div style="position:absolute;left:0;top:83px;height:23px">                 <span class="lv">animal</span>=<span class="st">"<span class="cj" style="width:30px">老虎</span>"</span>;</div><div style="position:absolute;left:0;top:106px;height:23px">                 <span class="kw">break</span>;</div><div style="position:absolute;left:0;top:129px;height:23px">                <span class="kw">case</span> 2:</div><div style="position:absolute;left:0;top:152px;height:23px">                    <span class="lv">animal</span>=<span class="st">"<span class="cj" style="width:30px">老鹰</span>"</span>;</div><div style="position:absolute;left:0;top:175px;height:23px">                    <span class="kw">break</span>;</div><div style="position:absolute;left:0;top:198px;height:23px">                <span class="kw">case</span> 3:</div><div style="position:absolute;left:0;top:221px;height:23px">                    <span class="lv">animal</span>=<span class="st">"<span class="cj" style="width:30px">小狗</span>"</span>;</div><div style="position:absolute;left:0;top:244px;height:23px">                    <span class="kw">break</span>;</div><div style="position:absolute;left:0;top:267px;height:23px">                <span class="kw">case</span> 4:</div><div style="position:absolute;left:0;top:290px;height:23px">                    <span class="lv">animal</span>=<span class="st">"<span class="cj" style="width:30px">小猫</span>"</span>;</div><div style="position:absolute;left:0;top:313px;height:23px">                    <span class="kw">break</span>;</div><div style="position:absolute;left:0;top:336px;height:23px">                <span class="kw">case</span> 5:</div><div style="position:absolute;left:0;top:359px;height:23px">                    <span class="lv">animal</span>=<span class="st">"<span class="cj" style="width:30px">小鸟</span>"</span>;</div><div style="position:absolute;left:0;top:382px;height:23px">                    <span class="kw">break</span>;</div><div style="position:absolute;left:0;top:405px;height:23px">                <span class="kw">case</span> 6:</div><div style="position:absolute;left:0;top:428px;height:23px">                    <span class="lv">animal</span>=<span class="st">"<span class="cj" style="width:45px">小兔子</span>"</span>;</div><div style="position:absolute;left:0;top:451px;height:23px">                    <span class="kw">break</span>;</div><div style="position:absolute;left:0;top:474px;height:23px">                <span class="kw">default</span>:</div><div style="position:absolute;left:0;top:497px;height:23px">                    <span class="lv">animal</span> =<span class="st">"<span class="cj" style="width:30px">未知</span>"</span>;</div><div style="position:absolute;left:0;top:520px;height:23px">            }</div><div style="position:absolute;left:0;top:543px;height:23px">            <span class="kw">if</span>(<span class="lv">animal</span>==<span class="st">"<span class="cj" style="width:30px">老虎</span>"</span>){</div><div style="position:absolute;left:0;top:566px;height:23px">                System.<span class="fi">out</span>.println(<span class="st">"<span class="cj" style="width:165px">老虎来啦，不玩了快跑！</span>"</span>);</div><div style="position:absolute;left:0;top:589px;height:23px">                <span class="kw">break</span>;</div><div style="position:absolute;left:0;top:612px;height:23px">            }</div><div style="position:absolute;left:0;top:635px;height:23px">            <span class="kw">if</span>(<span class="lv">animal</span>==<span class="st">"<span class="cj" style="width:30px">老鹰</span>"</span>){</div><div style="position:absolute;left:0;top:658px;height:23px">                System.<span class="fi">out</span>.println(<span class="st">"<span class="cj" style="width:238px">老鹰来了！躲起来等下一个动物出现</span>"</span>);</div><div style="position:absolute;left:0;top:681px;height:23px">                <span class="kw">continue</span>;</div><div style="position:absolute;left:0;top:704px;height:23px">            }</div><div style="position:absolute;left:0;top:727px;height:23px">            <span class="lv">count</span>++;<span class="cm">//<span class="cj" style="width:405px">对循环的次数进行统计，注意这里统计的是完整循环的次数。</span></span></div><div style="position:absolute;left:0;top:750px;height:23px">                System.<span class="fi">out</span>.println(<span class="st">"<span class="cj" style="width:165px">抓到一只可爱的小动物：</span>"</span>+<span class="lv">animal</span>);</div><div style="position:absolute;left:0;top:773px;height:23px">        }</div><div style="position:absolute;left:0;top:796px;height:23px">        System.<span class="fi">out</span>.println(<span class="st">"<span class="cj" style="width:60px">一共抓了</span>"</span>+<span class="lv">count</span>+<span class="st">"<span class="cj" style="width:74px">只小动物！</span>"</span>);</div><div style="position:absolute;left:0;top:819px;height:23px">    }</div><div style="position:absolute;left:0;top:842px;height:23px">}</div></div>
</div>
<div class="a" style="left:1936px;top:125px;width:25px;height:890px;background:#f0f0f0;"></div>
<div class="a" style="left:1961px;top:125px;width:13px;height:890px;background:#f8f8f8;"></div>
<div class="a" style="left:1943px;top:285px;width:11px;height:678px;background:#878787;"></div>
<div class="a" style="left:568px;top:989px;width:46px;height:26px;background:#f8f8f8;"></div>
<div class="a" style="left:614px;top:990px;width:1322px;height:25px;background:#f0f0f0;"></div>
<svg style="left:622px;top:996px" width="8" height="12" viewBox="0 0 8 12"><path d="M8 0 V12 L0 6 Z" fill="#a0a0a0"/></svg>
<svg style="left:1917px;top:996px" width="8" height="12" viewBox="0 0 8 12"><path d="M0 0 V12 L8 6 Z" fill="#a0a0a0"/></svg>
<div class="a" style="left:1979px;top:92px;width:260px;height:460px;border:1px solid #d9d9d9;background:#fff"></div>
<div class="a" style="left:1980px;top:93px;width:259px;height:32px;background:#e6e6e6;"></div>
<div class="a" style="left:1980px;top:93px;width:121px;height:32px;background:#f0f0f0;"></div>
<div class="a" style="left:2101px;top:93px;width:1px;height:32px;background:#d4d4d4;"></div>
<svg style="left:1987px;top:102px" width="12" height="16" viewBox="0 0 12 16"><path d="M1.5 0.5 H10.5 V15.5 L6 13 L1.5 15.5 Z" fill="#c8c8e0" stroke="#5a5a7a" stroke-width="0.9"/><path d="M3.5 3 H8.5 M3.5 5 H8.5 M3.5 7 H8.5 M3.5 9 H8.5" stroke="#5a5a7a" stroke-width="0.8"/></svg>
<div class="t" style="left:2003px;top:96px;line-height:27px;height:27px;">Task List</div>
<svg style="left:2082px;top:104px" width="12" height="12" viewBox="0 0 12 12"><path d="M1 1 L11 11 M11 1 L1 11" stroke="#222" stroke-width="1.2"/></svg>
<div class="a" style="left:2196px;top:100px;width:10px;height:4px;background:transparent;border:1px solid #000;border-radius:0.5px"></div>
<div class="a" style="left:2219px;top:100px;width:10px;height:10px;border:1px solid #000"></div><div class="a" style="left:2219px;top:102px;width:10px;height:1px;background:#000"></div>
<div class="a" style="left:1980px;top:125px;width:259px;height:82px;background:#f0f0f0;"></div>
<svg style="left:1987px;top:128px" width="16" height="16" viewBox="0 0 16 16"><path d="M1.5 3.5 H8 L10.5 6 V14.5 H1.5 Z" fill="#f8f8f8" stroke="#8a8a8a" stroke-width="0.8"/><path d="M10 0.5 L11 2.5 L13 3.5 L11 4.5 L10 6.5 L9 4.5 L7 3.5 L9 2.5 Z" fill="#f5d36b" stroke="#b08a30" stroke-width="0.6"/></svg>
<svg style="left:2009px;top:134px" width="11" height="6" viewBox="0 0 11 6"><path d="M0 0 H11 L5.5 6 Z" fill="#000"/></svg>
<div class="a" style="left:2028px;top:128px;width:1px;height:18px;background:#777"></div>
<div class="a" style="left:2034px;top:125px;width:23px;height:21px;background:#cce4f7;border:1px solid #99c9ef;border-radius:3px"></div>
<svg style="left:2038px;top:128px" width="16" height="16" viewBox="0 0 16 16"><rect x="2" y="1" width="5" height="4" fill="#e8c890" stroke="#6a8ab0" stroke-width="0.7"/><path d="M4.5 5 V14 M4.5 8 H8 M4.5 12 H8" stroke="#4a6aa8"/><rect x="8" y="6.5" width="3" height="3" fill="#fff" stroke="#4a6aa8" stroke-width="0.8"/><rect x="8" y="10.5" width="3" height="3" fill="#fff" stroke="#4a6aa8" stroke-width="0.8"/><path d="M12 8 H15 M12 12 H15" stroke="#4a6aa8"/></svg>
<svg style="left:2060px;top:128px" width="16" height="16" viewBox="0 0 16 16"><circle cx="4.5" cy="3.5" r="3" fill="#fff" stroke="#4a6aa8" stroke-width="0.9"/><path d="M4.5 6.5 V14 M4.5 9 H8 M4.5 13 H8" stroke="#4a6aa8"/><rect x="8" y="7.5" width="3" height="3" fill="#fff" stroke="#4a6aa8" stroke-width="0.8"/><rect x="8" y="11.5" width="3" height="3" fill="#fff" stroke="#4a6aa8" stroke-width="0.8"/></svg>
<div class="a" style="left:2083px;top:128px;width:1px;height:18px;background:#777"></div>
<svg style="left:2092px;top:128px" width="16" height="16" viewBox="0 0 16 16"><circle cx="5" cy="4" r="3" fill="#d4d4d4"/><circle cx="11" cy="6" r="3.3" fill="#c8c8c8"/><circle cx="5.5" cy="10.5" r="3.5" fill="#7a6ab8"/></svg>
<div class="a" style="left:2114px;top:128px;width:1px;height:18px;background:#777"></div>
<svg style="left:2122px;top:129px" width="16" height="16" viewBox="0 0 16 16"><path d="M2 2 L14 14 M3 10 L6 13 L10 7" stroke="#2a4a9a" stroke-width="1.3" fill="none"/></svg>
<svg style="left:2145px;top:128px" width="16" height="16" viewBox="0 0 16 16"><circle cx="4" cy="2.5" r="2" fill="#e0a020"/><rect x="2" y="5" width="4" height="10" fill="#e0a020"/><circle cx="10" cy="2.5" r="2" fill="#b0b0b0"/><rect x="8" y="5" width="4" height="10" fill="#b0b0b0"/><path d="M6 0 L15 10" stroke="#2a4a9a" stroke-width="1.2"/></svg>
<svg style="left:2170px;top:129px" width="16" height="16" viewBox="0 0 16 16"><rect x="0.5" y="0.5" width="10" height="10" fill="#d8eef0" stroke="#8a9ab8"/><rect x="2.5" y="2.5" width="11" height="10.5" fill="#e4f4f4" stroke="#8a9ab8"/><rect x="4.5" y="7" width="7" height="1.6" fill="#1a5a9a"/></svg>
<div class="a" style="left:2190px;top:128px;width:1px;height:18px;background:#777"></div>
<svg style="left:2199px;top:128px" width="16" height="16" viewBox="0 0 16 16"><rect x="7" y="1" width="8" height="13" rx="3" fill="#a8c8f0" stroke="#4a7ab8" stroke-width="0.8"/><path d="M2 6 Q3 1 8 2 L7 0 M9 9 Q8 14 3 13" fill="none" stroke="#e0a020" stroke-width="2"/></svg>
<svg style="left:1988px;top:151px" width="5" height="15" viewBox="0 0 5 15"><circle cx="2.5" cy="2.5" r="2" fill="#fff" stroke="#555" stroke-width="0.9"/><circle cx="2.5" cy="7.5" r="2" fill="#fff" stroke="#555" stroke-width="0.9"/><circle cx="2.5" cy="12.5" r="2" fill="#fff" stroke="#555" stroke-width="0.9"/></svg>
<div class="a" style="left:1990px;top:175px;width:90px;height:29px;background:#fff;border-bottom:1px solid #a0a0a0"></div>
<div class="t" style="left:1993px;top:175px;line-height:27px;height:27px;color:#6d6d6d">Find</div>
<svg style="left:2089px;top:184px" width="5" height="10" viewBox="0 0 5 10"><path d="M0 0 V10 L5 5 Z" fill="#333"/></svg>
<div class="t" style="left:2103px;top:175px;line-height:27px;height:27px;color:#1a5ab0">All</div>
<svg style="left:2137px;top:184px" width="5" height="10" viewBox="0 0 5 10"><path d="M0 0 V10 L5 5 Z" fill="#333"/></svg>
<div class="t" style="left:2152px;top:175px;line-height:27px;height:27px;color:#1a5ab0">Activat...</div>
<div class="a" style="left:1980px;top:207px;width:259px;height:344px;background:#fff;"></div>
<div class="a" style="left:1979px;top:556px;width:260px;height:460px;border:1px solid #d9d9d9;background:#fff"></div>
<div class="a" style="left:1980px;top:557px;width:259px;height:31px;background:#e6e6e6;"></div>
<div class="a" style="left:1980px;top:557px;width:114px;height:31px;background:#f0f0f0;"></div>
<div class="a" style="left:2094px;top:557px;width:1px;height:31px;background:#d4d4d4;"></div>
<svg style="left:1985px;top:565px" width="13" height="16" viewBox="0 0 13 16"><rect x="0.5" y="0.5" width="5" height="5" fill="#fff" stroke="#3a7ac8"/><rect x="0.5" y="10.5" width="5" height="5" fill="#fff" stroke="#3a7ac8"/><path d="M7 3 H13 M7 13 H13 M8 8 H13" stroke="#3a7ac8" stroke-width="1"/><rect x="8" y="7" width="2" height="2" fill="#3a7ac8"/></svg>
<div class="t" style="left:2003px;top:560px;line-height:27px;height:27px;">Outline</div>
<svg style="left:2076px;top:568px" width="12" height="12" viewBox="0 0 12 12"><path d="M1 1 L11 11 M11 1 L1 11" stroke="#222" stroke-width="1.2"/></svg>
<div class="a" style="left:2196px;top:564px;width:10px;height:4px;background:transparent;border:1px solid #000;border-radius:0.5px"></div>
<div class="a" style="left:2219px;top:564px;width:10px;height:10px;border:1px solid #000"></div><div class="a" style="left:2219px;top:566px;width:10px;height:1px;background:#000"></div>
<div class="a" style="left:1980px;top:588px;width:259px;height:23px;background:#f0f0f0;"></div>
<div class="a" style="left:2055px;top:588px;width:184px;height:23px;background:#e6e6e6;"></div>
<svg style="left:2060px;top:592px" width="16" height="16" viewBox="0 0 16 16"><circle cx="4.5" cy="4" r="3" fill="#d4d4d4"/><circle cx="10.5" cy="6" r="3.3" fill="#c8c8c8"/><circle cx="5" cy="10" r="3.5" fill="#a8a8a8"/></svg>
<svg style="left:2083px;top:592px" width="16" height="16" viewBox="0 0 16 16"><rect x="0.5" y="0.5" width="10" height="10" fill="#d8eef0" stroke="#8a9ab8"/><rect x="2.5" y="2.5" width="11" height="10.5" fill="#e4f4f4" stroke="#8a9ab8"/><rect x="4.5" y="7" width="7" height="1.6" fill="#1a5a9a"/></svg>
<svg style="left:2104px;top:591px" width="16" height="16" viewBox="0 0 16 16"><path d="M2.5 1 V14 M0.5 11 L2.5 14 L4.5 11" stroke="#2a4a7a" fill="none"/><text x="5" y="7" font-size="8" font-weight="bold" fill="#3a9a4a" font-family="Liberation Sans">a</text><text x="7" y="15" font-size="9" font-weight="bold" fill="#a040a0" font-family="Liberation Sans">z</text></svg>
<svg style="left:2128px;top:591px" width="16" height="16" viewBox="0 0 16 16"><circle cx="8" cy="8" r="5" fill="#4a9ae0"/><path d="M2 2 L14 14" stroke="#2a3a9a" stroke-width="1.4"/></svg>
<svg style="left:2151px;top:591px" width="16" height="16" viewBox="0 0 16 16"><circle cx="6" cy="9" r="4" fill="#a0a0a0"/><path d="M1 4 L11 14" stroke="#2a3a9a" stroke-width="1.3"/><text x="10" y="6" font-size="7" fill="#3a7ac8" font-family="Liberation Sans">S</text></svg>
<svg style="left:2173px;top:591px" width="16" height="16" viewBox="0 0 16 16"><circle cx="8" cy="8" r="4" fill="#3a9a4a"/><path d="M4.5 8 H11.5" stroke="#8ad09a" stroke-width="0.8"/></svg>
<svg style="left:2197px;top:591px" width="16" height="16" viewBox="0 0 16 16"><circle cx="6" cy="9" r="4" fill="#a0a0a0"/><path d="M1 4 L11 14" stroke="#2a3a9a" stroke-width="1.3"/><text x="10" y="6" font-size="7" font-weight="bold" fill="#3a7ac8" font-family="Liberation Sans">L</text></svg>
<svg style="left:2225px;top:592px" width="5" height="15" viewBox="0 0 5 15"><circle cx="2.5" cy="2.5" r="2" fill="#fff" stroke="#555" stroke-width="0.9"/><circle cx="2.5" cy="7.5" r="2" fill="#fff" stroke="#555" stroke-width="0.9"/><circle cx="2.5" cy="12.5" r="2" fill="#fff" stroke="#555" stroke-width="0.9"/></svg>
<div class="a" style="left:1980px;top:611px;width:259px;height:404px;background:#fff;"></div>
<svg style="left:2009px;top:617px" width="15" height="15" viewBox="0 0 15 15"><rect x="1.5" y="1.5" width="12" height="12" fill="#e8e4c0" stroke="#8a8a6a"/><path d="M7.5 0 V15 M0 7.5 H15" stroke="#6a6a4a" stroke-width="1.1"/></svg>
<div class="t" style="left:2034px;top:610px;line-height:27px;height:27px;">hw1</div>
<svg style="left:1988px;top:648px" width="10" height="6" viewBox="0 0 10 6"><path d="M0.5 0.5 L5 5 L9.5 0.5" fill="none" stroke="#333" stroke-width="1.2"/></svg>
<svg style="left:2008px;top:643px" width="17" height="17" viewBox="0 0 17 17"><circle cx="6.5" cy="6.5" r="6.3" fill="#2f8f3f"/><path d="M9 4.3 A3 3 0 1 0 9 8.7" fill="none" stroke="#fff" stroke-width="2"/><path d="M15 10 L21 12.5 L15 15 Z" fill="#2f8f3f"/></svg>
<div class="t" style="left:2034px;top:637px;line-height:27px;height:27px;">samillgame</div>
<div class="a" style="left:2029px;top:665px;width:201px;height:26px;background:#d9d9d9;border-radius:2px"></div>
<svg style="left:2034px;top:674px" width="9" height="9" viewBox="0 0 9 9"><circle cx="4.5" cy="4.5" r="4" fill="#3a9a4a"/></svg>
<div class="t" style="left:2046px;top:666px;line-height:27px;height:27px;font-size:9px;color:#d02040;line-height:14px;height:14px">S</div>
<div class="t" style="left:2058px;top:664px;line-height:27px;height:27px;">main(String[]) : void</div>
<div class="a" style="left:567px;top:1020px;width:1672px;height:282px;border:1px solid #d9d9d9;background:#fff"></div>
<div class="a" style="left:568px;top:1021px;width:1671px;height:31px;background:#f0f0f0;"></div>
<div class="a" style="left:905px;top:1021px;width:120px;height:31px;background:#fff;"></div>
<div class="a" style="left:904px;top:1021px;width:1px;height:31px;background:#d4d4d4;"></div>
<div class="a" style="left:1025px;top:1021px;width:1px;height:31px;background:#d4d4d4;"></div>
<svg style="left:572px;top:1029px" width="16" height="16" viewBox="0 0 16 16"><rect x="1.5" y="0.5" width="11" height="14" fill="#f0f0f8" stroke="#8a8aaa" stroke-width="0.8"/><circle cx="5" cy="4.5" r="3" fill="#e03030"/><path d="M1 14 L5 7 L9 14 Z" fill="#f0c030" stroke="#a07010" stroke-width="0.6"/><path d="M8 10 H12 M8 12 H12" stroke="#8a8aaa"/></svg>
<div class="t" style="left:591px;top:1024px;line-height:27px;height:27px;">Problems</div>
<svg style="left:684px;top:1029px" width="16" height="16" viewBox="0 0 16 16"><text x="1" y="12" font-size="12" fill="#3a6ab0" font-family="Liberation Sans">@</text></svg>
<div class="t" style="left:702px;top:1024px;line-height:27px;height:27px;">Javadoc</div>
<svg style="left:781px;top:1029px" width="17" height="17" viewBox="0 0 17 17"><path d="M1.5 0.5 H8 L11.5 4 V14.5 H1.5 Z" fill="#fff8e0" stroke="#b09050" stroke-width="0.8"/><path d="M4 5 Q3 7 4 9 M7 5 Q8 7 7 9" fill="none" stroke="#3a8a5a"/><path d="M8 10 H12 V8 L16 12 L12 16 V14 H8 Z" fill="#f0c040" stroke="#b08020" stroke-width="0.6"/></svg>
<div class="t" style="left:800px;top:1024px;line-height:27px;height:27px;">Declaration</div>
<svg style="left:911px;top:1030px" width="16" height="16" viewBox="0 0 16 16"><rect x="1" y="1" width="13" height="10" rx="1.5" fill="#fff" stroke="#2f5fb0" stroke-width="1.6"/><rect x="4" y="4" width="6" height="1.3" fill="#2f5fb0"/><rect x="4" y="6.7" width="7" height="1.3" fill="#2f5fb0"/><rect x="5" y="11" width="5" height="2" fill="#2f5fb0"/><rect x="3" y="13" width="9" height="1.5" fill="#2f5fb0"/></svg>
<div class="t" style="left:929px;top:1024px;line-height:27px;height:27px;">Console</div>
<svg style="left:1005px;top:1032px" width="12" height="12" viewBox="0 0 12 12"><path d="M1 1 L11 11 M11 1 L1 11" stroke="#222" stroke-width="1.2"/></svg>
<svg style="left:1029px;top:1030px" width="16" height="16" viewBox="0 0 16 16"><path d="M3 1 V15 M8 1 V15 M13 1 V15" stroke="#5a5a6a" stroke-width="1"/><rect x="1" y="8" width="4" height="3" fill="#3a9a4a"/><rect x="6" y="4" width="4" height="3" fill="#3a6ab0"/><rect x="11" y="10" width="4" height="3" fill="#3a6ab0"/></svg>
<div class="t" style="left:1047px;top:1024px;line-height:27px;height:27px;font-weight:bold">Servers</div>
<svg style="left:1124px;top:1030px" width="16" height="16" viewBox="0 0 16 16"><rect x="0.5" y="2.5" width="13" height="11" fill="#fff" stroke="#5a5a6a"/><path d="M0.5 5.5 H13.5 M4.5 5.5 V13.5" stroke="#5a5a6a"/></svg>
<div class="t" style="left:1142px;top:1024px;line-height:27px;height:27px;">Properties</div>
<svg style="left:1881px;top:1027px" width="14" height="14" viewBox="0 0 14 14"><rect x="1.5" y="1.5" width="10" height="10" fill="#c8c8c8" stroke="#a8a8a8"/></svg>
<svg style="left:1902px;top:1026px" width="16" height="16" viewBox="0 0 16 16"><path d="M2 2 L13 13 M13 2 L2 13" stroke="#6a6a6a" stroke-width="3.2"/></svg>
<svg style="left:1925px;top:1026px" width="16" height="16" viewBox="0 0 16 16"><path d="M2 2 L13 13 M13 2 L2 13" stroke="#8a8a8a" stroke-width="2.6"/><path d="M6 0 L15 9 M15 0 L6 9" stroke="#a8a8a8" stroke-width="1.5"/></svg>
<div class="a" style="left:1946px;top:1024px;width:1px;height:18px;background:#555"></div>
<svg style="left:1955px;top:1025px" width="16" height="16" viewBox="0 0 16 16"><rect x="1.5" y="0.5" width="10" height="13" fill="#f4f8fc" stroke="#b09050" stroke-width="0.8"/><path d="M3 3 H9 M3 5.5 H9 M3 8 H9" stroke="#4a7ad0"/><path d="M10 10 L15 15 M15 10 L10 15" stroke="#7a7a7a" stroke-width="1.6"/></svg>
<svg style="left:1978px;top:1025px" width="16" height="16" viewBox="0 0 16 16"><rect x="6.5" y="0.5" width="9" height="14" fill="#e8f0fa" stroke="#6a8ab0"/><path d="M12 2 V5 M12 7 V10" stroke="#3a6ab0" stroke-width="1.5"/><rect x="0.5" y="9" width="8" height="6.5" fill="#e0a020" stroke="#8a6010" stroke-width="0.6"/><path d="M2.5 9 V6.5 A2 2 0 0 1 6.5 6.5 V9" fill="none" stroke="#8a6010"/></svg>
<svg style="left:2002px;top:1025px" width="16" height="16" viewBox="0 0 16 16"><rect x="1.5" y="0.5" width="10" height="13" fill="#fbf4e0" stroke="#b09050" stroke-width="0.8"/><path d="M3 3 H9 M3 5.5 H9 M3 8 H7" stroke="#4a7ad0"/><path d="M14 5 V11 H8 M10 9 L8 11 L10 13" fill="none" stroke="#d09020" stroke-width="1.6"/></svg>
<div class="a" style="left:2021px;top:1022px;width:22px;height:22px;background:#cce4f7;border:1px solid #99c9ef;border-radius:3px"></div>
<svg style="left:2025px;top:1025px" width="16" height="16" viewBox="0 0 16 16"><rect x="5.5" y="0.5" width="10" height="8" fill="#fff" stroke="#3a6ab0" stroke-width="1.2"/><path d="M7.5 3 H13 M7.5 5.5 H12" stroke="#3a6ab0"/><rect x="0.5" y="6.5" width="7" height="6" fill="#fff" stroke="#3a6ab0"/><rect x="2" y="13" width="4" height="2" fill="#3a6ab0"/></svg>
<div class="a" style="left:2044px;top:1022px;width:22px;height:22px;background:#cce4f7;border:1px solid #99c9ef;border-radius:3px"></div>
<svg style="left:2048px;top:1025px" width="16" height="16" viewBox="0 0 16 16"><rect x="5.5" y="0.5" width="10" height="8" fill="#fff" stroke="#3a6ab0" stroke-width="1.2"/><path d="M7 2 L10 6 M10 2 L7 6" stroke="#e03030" stroke-width="1.4"/><path d="M11 3 H14 M11 5.5 H14" stroke="#3a6ab0"/><rect x="0.5" y="6.5" width="7" height="6" fill="#fff" stroke="#3a6ab0"/><rect x="2" y="13" width="4" height="2" fill="#3a6ab0"/></svg>
<div class="a" style="left:2069px;top:1024px;width:1px;height:18px;background:#555"></div>
<svg style="left:2079px;top:1025px" width="16" height="16" viewBox="0 0 16 16"><rect x="1.5" y="4.5" width="13" height="11" fill="#eef5fb" stroke="#a08850"/><rect x="2" y="5" width="12" height="2.5" fill="#4a90d9"/><path d="M9 9 L12 5" stroke="#226622" stroke-width="1.5"/><circle cx="13" cy="3.5" r="3" fill="#3aa040"/></svg>
<svg style="left:2103px;top:1025px" width="16" height="16" viewBox="0 0 16 16"><rect x="1" y="1" width="13" height="10" rx="1.5" fill="#fff" stroke="#2f5fb0" stroke-width="1.6"/><rect x="4" y="4" width="6" height="1.3" fill="#2f5fb0"/><rect x="4" y="6.7" width="7" height="1.3" fill="#2f5fb0"/><rect x="5" y="11" width="5" height="2" fill="#2f5fb0"/><rect x="3" y="13" width="9" height="1.5" fill="#2f5fb0"/></svg>
<svg style="left:2127px;top:1030px" width="11" height="6" viewBox="0 0 11 6"><path d="M0 0 H11 L5.5 6 Z" fill="#000"/></svg>
<svg style="left:2149px;top:1025px" width="16" height="16" viewBox="0 0 16 16"><rect x="1.5" y="3.5" width="12" height="11" fill="#eef5fb" stroke="#a08850"/><rect x="2" y="4" width="11" height="2.5" fill="#4a90d9"/><path d="M12 0.5 L13.5 3 L16 4 L13.5 5 L12 7.5 L10.5 5 L8 4 L10.5 3 Z" fill="#f5d36b" stroke="#b08a30" stroke-width="0.6"/></svg>
<svg style="left:2173px;top:1030px" width="11" height="6" viewBox="0 0 11 6"><path d="M0 0 H11 L5.5 6 Z" fill="#000"/></svg>
<div class="a" style="left:2196px;top:1029px;width:10px;height:4px;background:transparent;border:1px solid #000;border-radius:0.5px"></div>
<div class="a" style="left:2219px;top:1029px;width:10px;height:10px;border:1px solid #000"></div><div class="a" style="left:2219px;top:1031px;width:10px;height:1px;background:#000"></div>
<div class="a" style="left:568px;top:1052px;width:1671px;height:25px;background:#fff;"></div>
<div class="a" style="left:568px;top:1076px;width:1671px;height:1px;background:#a8a8a8;"></div>
<div class="t" style="left:570px;top:1052px;line-height:25px;height:25px;letter-spacing:0.24px">&lt;terminated&gt; samillgame [Java Application] C:\Program Files\Java\jdk-20\bin\javaw.exe</div>
<div class="t" style="left:1339px;top:1052px;line-height:25px;height:25px;letter-spacing:-0.8px">(2024</div>
<div class="t" style="left:1385px;top:1052px;line-height:25px;height:25px;"><span style="display:inline-block;width:17px;overflow:hidden;font-size:17px">年</span></div>
<div class="t" style="left:1415px;top:1052px;line-height:25px;height:25px;"><span style="display:inline-block;width:17px;overflow:hidden;font-size:17px">月</span></div>
<div class="t" style="left:1449px;top:1052px;line-height:25px;height:25px;"><span style="display:inline-block;width:17px;overflow:hidden;font-size:17px">日</span></div>
<div class="t" style="left:1403px;top:1052px;line-height:25px;height:25px;">3</div>
<div class="t" style="left:1437px;top:1052px;line-height:25px;height:25px;">5</div>
<div class="t" style="left:1470px;top:1052px;line-height:25px;height:25px;">22:38:48 – 22:38:48) [pid: 7612]</div>
<div class="a" style="left:570px;top:1078px;width:1644px;height:198px;background:#fff;font-family:'Liberation Mono',monospace;font-size:15px;line-height:23px"><div style="height:23px"><span class="cj" style="width:196px">抓到一只可爱的小动物：小猫</span></div><div style="height:23px"><span class="cj" style="width:163px">老虎来啦，不玩了快跑！</span></div><div style="height:23px"><span class="cj" style="width:60px">一共抓了</span><span style="font-size:20px;color:#2a5ab0;display:inline-block;vertical-align:top;width:12px;text-align:center">1</span><span class="cj" style="width:74px">只小动物！</span></div></div>
<div class="a" style="left:570px;top:1081px;width:1px;height:18px;background:#000;"></div>
<div class="a" style="left:2214px;top:1077px;width:25px;height:224px;background:#f0f0f0;"></div>
<svg style="left:2221px;top:1088px" width="12" height="8" viewBox="0 0 12 8"><path d="M0 8 H12 L6 0 Z" fill="#a0a0a0"/></svg>
<svg style="left:2221px;top:1258px" width="12" height="8" viewBox="0 0 12 8"><path d="M0 0 H12 L6 8 Z" fill="#a0a0a0"/></svg>
<div class="a" style="left:568px;top:1276px;width:1646px;height:25px;background:#f0f0f0;"></div>
<svg style="left:576px;top:1282px" width="8" height="12" viewBox="0 0 8 12"><path d="M8 0 V12 L0 6 Z" fill="#a0a0a0"/></svg>
<svg style="left:2194px;top:1282px" width="8" height="12" viewBox="0 0 8 12"><path d="M0 0 V12 L8 6 Z" fill="#a0a0a0"/></svg>
<div class="a" style="left:0px;top:1302px;width:2239px;height:27px;background:#f0f0f0;"></div>
<div class="a" style="left:1820px;top:1308px;width:2px;height:2px;background:#c0a880"></div><div class="a" style="left:1820px;top:1311px;width:2px;height:2px;background:#c0a880"></div><div class="a" style="left:1820px;top:1314px;width:2px;height:2px;background:#c0a880"></div><div class="a" style="left:1820px;top:1317px;width:2px;height:2px;background:#c0a880"></div><div class="a" style="left:1820px;top:1320px;width:2px;height:2px;background:#c0a880"></div>
<div class="a" style="left:2215px;top:1308px;width:2px;height:2px;background:#c0a880"></div><div class="a" style="left:2215px;top:1311px;width:2px;height:2px;background:#c0a880"></div><div class="a" style="left:2215px;top:1314px;width:2px;height:2px;background:#c0a880"></div><div class="a" style="left:2215px;top:1317px;width:2px;height:2px;background:#c0a880"></div><div class="a" style="left:2215px;top:1320px;width:2px;height:2px;background:#c0a880"></div>
<svg style="left:2223px;top:1306px" width="12" height="18" viewBox="0 0 12 18"><path d="M6 1 A5 5 0 0 1 9 10 V12 H3 V10 A5 5 0 0 1 6 1 Z" fill="#fde060" stroke="#d0a020" stroke-width="0.8"/><rect x="3.5" y="12.5" width="5" height="4" fill="#8a9ab8"/></svg>
<div class="a" style="left:0px;top:1328px;width:2239px;height:1px;background:#b8b2b8;"></div>
<div class="a" style="left:0;top:1329px;width:2239px;height:70px;background:linear-gradient(90deg,#e6dedb 0%,#e2e0ec 20%,#e6e0ee 40%,#ebe1ea 55%,#e4e1ef 70%,#e6e0ee 85%,#e9e1eb 100%)"></div>
<svg style="left:28px;top:1345px" width="40" height="40" viewBox="0 0 40 40"><defs><linearGradient id="cg" x1="0" y1="0" x2="0" y2="1"><stop offset="0" stop-color="#b8d4f8"/><stop offset="0.7" stop-color="#d4e4f8"/><stop offset="1" stop-color="#9ab8ec"/></linearGradient><linearGradient id="dg" x1="0" y1="0" x2="0.6" y2="1"><stop offset="0" stop-color="#6ab4ff"/><stop offset="1" stop-color="#0a5af0"/></linearGradient></defs><path d="M8 27 Q0 27 0.8 19 Q2 11 10 11.5 Q13 4 22 5 Q31 6 33 14 Q37 16 36.5 21 Q36 27 30 27 Z" fill="url(#cg)"/><path d="M20 19 L31 29 Q32.5 36 26 36.5 Q20 36.5 20 30 Z" fill="url(#dg)"/></svg><div class="a" style="left:46px;top:1338px;width:23px;height:23px;border-radius:50%;background:#c42b1c;color:#fff;font-size:15px;line-height:23px;text-align:center">1</div>
<div class="t" style="left:76px;top:1339px;line-height:27px;height:27px;font-size:18px;color:#1a1a1a;line-height:24px;height:24px">10°C</div>
<div class="t" style="left:76px;top:1363px;line-height:27px;height:27px;color:#333;line-height:24px;height:24px"><span style="display:inline-block;width:38px;overflow:hidden;font-size:18px">小雨</span></div>
<svg style="left:636px;top:1346px" width="36" height="36" viewBox="0 0 36 36"><defs><linearGradient id="wg" x1="0" y1="0" x2="1" y2="1"><stop offset="0" stop-color="#2ab4f8"/><stop offset="1" stop-color="#0a66d8"/></linearGradient></defs><rect x="0" y="0" width="17" height="17" rx="1.5" fill="url(#wg)"/><rect x="19" y="0" width="17" height="17" rx="1.5" fill="url(#wg)"/><rect x="0" y="19" width="17" height="17" rx="1.5" fill="url(#wg)"/><rect x="19" y="19" width="17" height="17" rx="1.5" fill="url(#wg)"/></svg>
<div class="a" style="left:693px;top:1340px;width:327px;height:48px;border-radius:24px;background:#f8f6fa;border:1px solid #d8d4dc"></div>
<svg style="left:708px;top:1350px" width="28" height="28" viewBox="0 0 28 28"><circle cx="11" cy="11" r="8.5" fill="none" stroke="#222" stroke-width="2.6"/><path d="M17 17 L25 25" stroke="#222" stroke-width="2.8" stroke-linecap="round"/></svg>
<div class="t" style="left:747px;top:1350px;line-height:27px;height:27px;font-size:21px;color:#555;line-height:28px;height:28px"><span style="display:inline-block;width:46px;overflow:hidden">搜索</span></div>
<svg style="left:941px;top:1350px" width="78" height="36" viewBox="0 0 78 36"><defs><linearGradient id="wt" x1="0" y1="0" x2="0" y2="1"><stop offset="0" stop-color="#7ad4ea"/><stop offset="1" stop-color="#2a9ac8"/></linearGradient><linearGradient id="rk" x1="0" y1="0" x2="0" y2="1"><stop offset="0" stop-color="#c8b4a4"/><stop offset="1" stop-color="#8a7464"/></linearGradient></defs><path d="M1 22 Q-1 33 14 34 H52 Q64 32 62 23 Z" fill="url(#wt)"/><path d="M6 24 Q4 14 14 12 Q22 10 26 14 L26 26 Z" fill="url(#rk)"/><path d="M18 28 Q16 14 28 10 Q38 9 42 18 Q44 28 36 30 Z" fill="url(#rk)"/><rect x="22" y="3" width="12" height="8" fill="#b8a898" stroke="#8a7a6a" stroke-width="0.6"/><path d="M26 12 Q28 4 36 6 Q42 4 44 10 Q42 16 34 15 Q28 16 26 12 Z" fill="#6aa040"/><rect x="40" y="8" width="30" height="18" fill="#f2dcb4"/><path d="M42 8 L48 3 L54 8 Z M54 10 L60 5 L66 10 Z M46 16 L51 12 L56 16 Z M60 16 L66 11 L72 16 Z" fill="#e0683a"/><path d="M58 4 Q64 -1 72 2 Q78 4 76 12 Q70 10 64 8 Z" fill="#5a9a3a"/><rect x="44" y="18" width="2" height="3" fill="#8a6a4a"/><rect x="50" y="18" width="2" height="3" fill="#8a6a4a"/><path d="M48 34 Q50 26 58 24 Q68 22 76 26 L76 34 Z" fill="url(#rk)"/><path d="M26 28 Q30 24 36 27" fill="none" stroke="#e8f8fc" stroke-width="1"/></svg>
<svg style="left:1040px;top:1347px" width="36" height="34" viewBox="0 0 36 34"><rect x="10" y="0" width="24" height="22" rx="2" fill="#f8f8f8" stroke="#d0d0d0" stroke-width="1"/><rect x="0" y="10" width="24" height="24" rx="2" fill="#222"/><rect x="10" y="10" width="14" height="12" fill="#c8c8c8"/></svg>
<svg style="left:1105px;top:1347px" width="38" height="34" viewBox="0 0 38 34"><path d="M0 4 Q0 0 4 0 H14 L18 4 H34 Q38 4 38 8 V34 H0 Z" fill="#f0b820"/><rect x="0" y="8" width="38" height="26" rx="2" fill="#fcd04a"/><rect x="8" y="22" width="22" height="12" rx="3" fill="#1a70d8"/><rect x="13" y="26" width="12" height="2" fill="#fff"/></svg>
<svg style="left:1171px;top:1345px" width="38" height="38" viewBox="0 0 38 38"><defs><linearGradient id="eg" x1="0" y1="0" x2="1" y2="1"><stop offset="0" stop-color="#36c2e8"/><stop offset="0.6" stop-color="#1a7ad8"/><stop offset="1" stop-color="#0a4aa8"/></linearGradient><linearGradient id="eg2" x1="0" y1="0" x2="1" y2="1"><stop offset="0" stop-color="#8ad860"/><stop offset="1" stop-color="#2ab4a0"/></linearGradient></defs><circle cx="19" cy="19" r="18" fill="url(#eg)"/><path d="M37 19 Q37 6 22 3 Q34 10 30 20 Q22 24 16 20 Q12 30 24 34 Q34 32 37 24 Z" fill="url(#eg2)"/><circle cx="20" cy="22" r="7" fill="#fff" opacity="0.15"/></svg>
<div class="a" style="left:1186px;top:1387px;width:10px;height:4px;background:#8a8a8a;border-radius:2px"></div>
<svg style="left:1238px;top:1346px" width="36" height="36" viewBox="0 0 36 36"><path d="M10 6 V2 Q10 0 12 0 H24 Q26 0 26 2 V6" fill="none" stroke="#20b0f0" stroke-width="2.5"/><rect x="0" y="6" width="36" height="30" rx="3" fill="#1a4a8a"/><rect x="9" y="13" width="8" height="8" fill="#f25022"/><rect x="19" y="13" width="8" height="8" fill="#7fba00"/><rect x="9" y="23" width="8" height="8" fill="#00a4ef"/><rect x="19" y="23" width="8" height="8" fill="#ffb900"/></svg>
<svg style="left:1306px;top:1345px" width="34" height="38" viewBox="0 0 34 38"><path d="M2 1 H22 L30 9 V37 H2 Z" fill="#f0f0f0" stroke="#c8c8c8"/><path d="M5 6 H18 M5 10 H20 M5 14 H24 M5 18 H16 M5 22 H20 M5 26 H14 M5 30 H18" stroke="#b8b8b8" stroke-width="1.2"/><path d="M16 18 Q16 14 22 14 Q28 14 28 18 V24 H20 V26 H14 Q12 26 12 22 Q12 18 16 18 Z" fill="#3a70b0"/><path d="M28 24 H32 Q34 24 34 28 Q34 32 30 32 V36 Q30 38 24 38 Q18 38 18 34 V28 H28 Z" fill="#f8d030"/></svg>
<svg style="left:1368px;top:1349px" width="38" height="30" viewBox="0 0 38 30"><rect x="0" y="0" width="38" height="30" fill="#c8c8c8"/><rect x="1" y="3" width="36" height="26" fill="#0a0a0a"/><text x="4" y="13" font-size="8" fill="#e8e8e8" font-family="Liberation Mono">C:\_</text></svg>
<svg style="left:1434px;top:1346px" width="34" height="34" viewBox="0 0 34 34"><rect x="0" y="0" width="34" height="34" rx="6" fill="#d42a2a"/><path d="M6 32 Q10 14 28 6 M11 32 Q14 18 30 12 M16 32 Q18 22 31 18" fill="none" stroke="#fff" stroke-width="2.4"/><path d="M26 2 L28 7 L33 7 L29 10 L31 15 L26 12 L21 15 L23 10 L19 7 L24 7 Z" fill="#fff"/></svg>
<div class="a" style="left:1449px;top:1387px;width:10px;height:4px;background:#8a8a8a;border-radius:2px"></div>
<svg style="left:1500px;top:1350px" width="36" height="30" viewBox="0 0 36 30"><path d="M0 2 L8 28 H14 L18 14 L22 28 H28 L36 2 H30 L25 20 L21 6 H15 L11 20 L6 2 Z" fill="#e8341c"/><path d="M22 4 L36 2 L30 18 Z" fill="#f05a28" opacity="0.8"/></svg>
<div class="a" style="left:1514px;top:1387px;width:10px;height:4px;background:#8a8a8a;border-radius:2px"></div>
<div class="a" style="left:1556px;top:1338px;width:58px;height:56px;background:#f2f0f6;border-radius:6px;border:1px solid #e4e0ea"></div>
<svg style="left:1567px;top:1345px" width="38" height="38" viewBox="0 0 38 38"><circle cx="19" cy="19" r="18" fill="#f7941e"/><circle cx="21" cy="19" r="17" fill="#2c2255"/><rect x="4" y="13" width="34" height="2.5" fill="#fff"/><rect x="4" y="17.5" width="34" height="2.5" fill="#fff"/><rect x="4" y="22" width="34" height="2.5" fill="#fff"/></svg>
<div class="a" style="left:1573px;top:1387px;width:25px;height:4px;background:#0a6ad8;border-radius:2px"></div>
<svg style="left:1886px;top:1357px" width="20" height="12" viewBox="0 0 20 12"><path d="M2 10 L10 2 L18 10" fill="none" stroke="#222" stroke-width="2"/></svg>
<div class="t" style="left:1931px;top:1350px;line-height:27px;height:27px;font-size:22px;color:#222;line-height:28px;height:28px"><span style="display:inline-block;width:26px;overflow:hidden">英</span></div>
<svg style="left:1980px;top:1352px" width="28" height="24" viewBox="0 0 28 24"><path d="M1 9 Q14 -3 27 9" fill="none" stroke="#222" stroke-width="2.2"/><path d="M5 13 Q14 5 23 13" fill="none" stroke="#222" stroke-width="2.2"/><path d="M9 17 Q14 13 19 17" fill="none" stroke="#222" stroke-width="2.2"/><circle cx="14" cy="21" r="2" fill="#222"/></svg>
<svg style="left:2017px;top:1354px" width="26" height="22" viewBox="0 0 26 22"><path d="M2 7 H7 L13 2 V20 L7 15 H2 Z" fill="none" stroke="#222" stroke-width="2"/><path d="M17 7 L24 14 M24 7 L17 14" stroke="#222" stroke-width="2"/></svg>
<svg style="left:2052px;top:1353px" width="26" height="22" viewBox="0 0 26 22"><rect x="2" y="7" width="19" height="12" rx="2" fill="none" stroke="#222" stroke-width="2"/><rect x="21" y="10" width="3" height="6" fill="#222"/><rect x="4" y="9" width="14" height="8" fill="#222"/><path d="M6 0 L3 8 H9 L6 14" fill="none" stroke="#222" stroke-width="1.6"/></svg>
<div class="t" style="left:2080px;top:1339px;line-height:27px;height:27px;font-size:18px;color:#1a1a1a;line-height:24px;height:24px;width:96px;text-align:right">22:38</div>
<div class="t" style="left:2080px;top:1363px;line-height:27px;height:27px;font-size:18px;color:#1a1a1a;line-height:24px;height:24px;width:96px;text-align:right">2024/3/5</div>
<svg style="left:2187px;top:1352px" width="22" height="24" viewBox="0 0 22 24"><path d="M11 1 Q3 1 3 10 V16 L1 19 H21 L19 16 V10 Q19 1 11 1 Z" fill="#0a3aa0"/><path d="M7 20 Q11 25 15 20 Z" fill="#0a3aa0"/></svg>
</body></html>
